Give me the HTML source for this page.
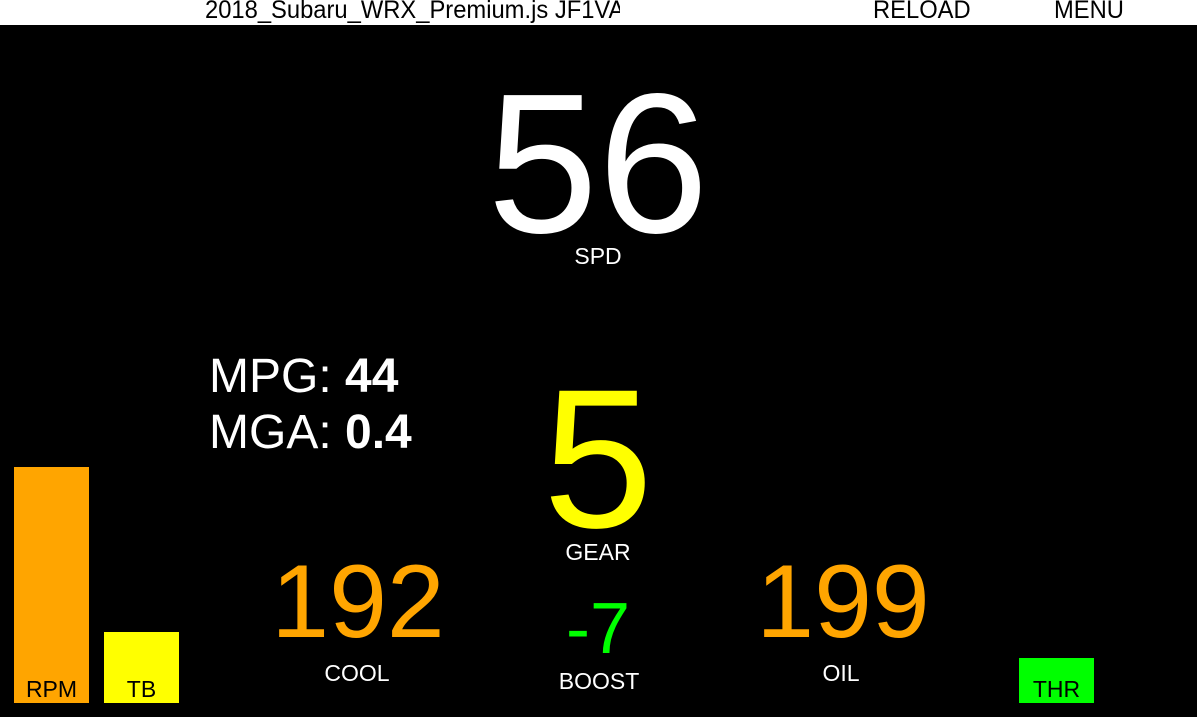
<!DOCTYPE html>
<html><head><meta charset="utf-8"><style>
html,body{margin:0;padding:0}
body{width:1197px;height:719px;background:#fff;position:relative;overflow:hidden;font-family:"Liberation Sans",Arial,sans-serif}
#main{position:absolute;left:0;top:25px;width:1197px;height:692px;background:#000}
.t{position:absolute;white-space:nowrap;line-height:1}
.c{transform:translateX(-50%)}
.h{position:absolute;top:-2px;font-size:25px;line-height:25px;color:#000;transform:scaleX(0.95);transform-origin:left top;white-space:nowrap}
.bar{position:absolute;text-align:center;color:#000;font-size:23px}
.bar span{position:absolute;left:0;right:0;bottom:2px;line-height:23px}
</style></head><body>
<div style="position:absolute;left:205px;top:0;width:415px;height:25px;overflow:hidden"><div class="h" style="left:0">2018_Subaru_WRX_Premium.js JF1VA1234567890</div></div>
<div class="h" style="left:873px">RELOAD</div>
<div class="h" style="left:1054px">MENU</div>
<div id="main"></div>
<div class="t c" style="left:598px;top:65px;font-size:199px;color:#fff">56</div>
<div class="t c" style="left:598px;top:245px;font-size:23px;color:#fff">SPD</div>
<div class="t" style="left:209px;top:353px;font-size:48px;color:#fff">MPG: <b>44</b></div>
<div class="t" style="left:209px;top:409px;font-size:48px;color:#fff">MGA: <b>0.4</b></div>
<div class="t c" style="left:598px;top:360px;font-size:198px;color:#ff0">5</div>
<div class="t c" style="left:598px;top:541px;font-size:23px;color:#fff">GEAR</div>
<div class="t c" style="left:358px;top:550px;font-size:104px;color:#ffa500">192</div>
<div class="t c" style="left:357px;top:662px;font-size:23px;color:#fff">COOL</div>
<div class="t c" style="left:843px;top:550px;font-size:104px;color:#ffa500">199</div>
<div class="t c" style="left:841px;top:662px;font-size:23px;color:#fff">OIL</div>
<div class="t c" style="left:598px;top:593px;font-size:72px;color:#0f0">-7</div>
<div class="t c" style="left:599px;top:670px;font-size:23px;color:#fff">BOOST</div>
<div class="bar" style="left:14px;top:467px;width:75px;height:236px;background:#ffa500"><span>RPM</span></div>
<div class="bar" style="left:104px;top:632px;width:75px;height:71px;background:#ff0"><span>TB</span></div>
<div class="bar" style="left:1019px;top:658px;width:75px;height:45px;background:#0f0"><span>THR</span></div>
</body></html>
